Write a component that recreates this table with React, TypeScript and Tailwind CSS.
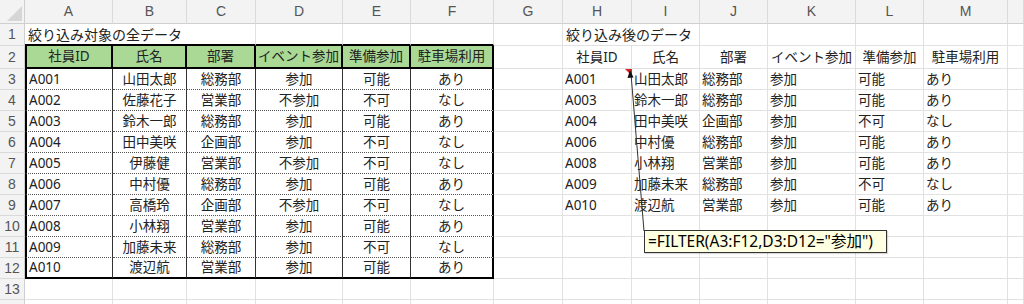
const COLS = ['A', 'B', 'C', 'D', 'E', 'F', 'G', 'H', 'I', 'J', 'K', 'L', 'M', ''];

type Row = [string, string, string, string, string, string];

const allRows: Row[] = [
  ['A001', '山田太郎', '総務部', '参加', '可能', 'あり'],
  ['A002', '佐藤花子', '営業部', '不参加', '不可', 'なし'],
  ['A003', '鈴木一郎', '総務部', '参加', '可能', 'あり'],
  ['A004', '田中美咲', '企画部', '参加', '不可', 'なし'],
  ['A005', '伊藤健', '営業部', '不参加', '不可', 'なし'],
  ['A006', '中村優', '総務部', '参加', '可能', 'あり'],
  ['A007', '高橋玲', '企画部', '不参加', '不可', 'なし'],
  ['A008', '小林翔', '営業部', '参加', '可能', 'あり'],
  ['A009', '加藤未来', '総務部', '参加', '不可', 'なし'],
  ['A010', '渡辺航', '営業部', '参加', '可能', 'あり'],
];

const headers = ['社員ID', '氏名', '部署', 'イベント参加', '準備参加', '駐車場利用'];

// filtered copy, same as the FILTER result
const filtered = allRows.filter((r) => r[3] === '参加');

const grid = 'border-r border-b border-[#e1e1e1]';

function Cell({ r, c }: { r: number; c: number }) {
  // left table: A2:F12
  if (c >= 1 && c <= 6 && r === 1) {
    if (c === 1) {
      return (
        <div className="col-span-2 border-b-2 border-black flex items-center pl-[3px] whitespace-nowrap text-[14px]">
          絞り込み対象の全データ
        </div>
      );
    }
    if (c === 2) return null;
    return <div className="border-b-2 border-black border-r border-r-[#e1e1e1]" />;
  }
  if (c >= 1 && c <= 6 && r === 2) {
    return (
      <div
        className={`bg-[#a9d995] border-b-2 border-r-2 border-black flex items-center justify-center whitespace-nowrap ${c === 1 ? 'border-l-2' : ''}`}
      >
        {headers[c - 1]}
      </div>
    );
  }
  if (c >= 1 && c <= 6 && r >= 3 && r <= 12) {
    const v = allRows[r - 3][c - 1];
    const bottom =
      r === 12 ? 'border-b-2 border-b-black' : 'border-b [border-bottom-style:dotted] border-b-[#555]';
    const right = c === 6 ? 'border-r-2 border-r-black' : 'border-r border-r-[#333]';
    return (
      <div
        className={`${bottom} ${right} ${c === 1 ? 'border-l-2 border-l-black justify-start pl-[2px]' : 'justify-center'} flex items-center whitespace-nowrap`}
      >
        {v}
      </div>
    );
  }

  // right table: H..M
  if (c === 8 && r === 1) {
    return (
      <div className="col-span-2 border-r border-b border-[#e1e1e1] flex items-center pl-[3px] whitespace-nowrap text-[14px]">
        絞り込み後のデータ
      </div>
    );
  }
  if (c === 9 && r === 1) return null;
  if (c >= 8 && c <= 13 && r === 2) {
    return <div className={`${grid} flex items-center justify-center whitespace-nowrap`}>{headers[c - 8]}</div>;
  }
  if (c >= 8 && c <= 13 && r >= 3 && r < 3 + filtered.length) {
    return (
      <div className={`${grid} flex items-center pl-[2px] whitespace-nowrap`}>{filtered[r - 3][c - 8]}</div>
    );
  }
  return <div className={grid} />;
}

export default function App() {
  const rows = Array.from({ length: 14 }, (_, i) => i + 1);
  return (
    <div
      className="relative w-[1024px] h-[304px] overflow-hidden bg-white text-[13.5px] text-[#222]"
      style={{ fontFamily: '"Noto Sans", "Noto Sans CJK JP", sans-serif' }}
    >
      <div className="grid grid-cols-[25px_88px_74px_69px_87px_68px_83px_69px_69px_68px_68px_88px_68px_84px_1fr] grid-rows-[24px_22px_23px_repeat(11,21px)_21px]">
        {/* corner */}
        <div className="relative bg-[#f3f3f3] border-r border-b border-[#cfcfcf]">
          <svg className="absolute left-0 top-0" width="25" height="24">
            <polygon points="7,21 22,21 22,6" fill="#d6d6d6" />
          </svg>
        </div>
        {COLS.map((l, i) => (
          <div
            key={'h' + i}
            className="bg-[#f3f3f3] border-r border-b border-r-[#dadada] border-b-[#cfcfcf] flex items-center justify-center text-[14px] text-[#555] font-['Liberation_Sans']"
          >
            {l}
          </div>
        ))}
        {rows.map((r) => (
          <div key={'r' + r} className="contents">
            <div className="bg-[#f3f3f3] border-r border-b border-r-[#cfcfcf] border-b-[#dadada] flex items-center justify-center text-[14px] text-[#555] font-['Liberation_Sans']">
              {r < 14 ? r : ''}
            </div>
            {COLS.map((_, i) => (
              <Cell key={r + '-' + i} r={r} c={i + 1} />
            ))}
          </div>
        ))}
      </div>

      {/* comment connector */}
      <svg className="absolute left-0 top-0 pointer-events-none" width="1024" height="304">
        <polygon points="625,69 632,69 632,76" fill="#e02020" />
        <line x1="631" y1="74" x2="644" y2="231" stroke="#333" strokeWidth="1" />
        <polygon points="630,70 627.5,78 633.5,77.5" fill="#111" />
      </svg>
      <div className="absolute left-[644px] top-[230px] w-[243px] h-[23px] bg-[#ffffe1] border border-[#333] shadow-[1px_1px_1px_rgba(0,0,0,0.15)] flex items-center pl-[3px] text-[15.5px] text-black whitespace-nowrap">
        =FILTER(A3:F12,D3:D12="参加")
      </div>
    </div>
  );
}
